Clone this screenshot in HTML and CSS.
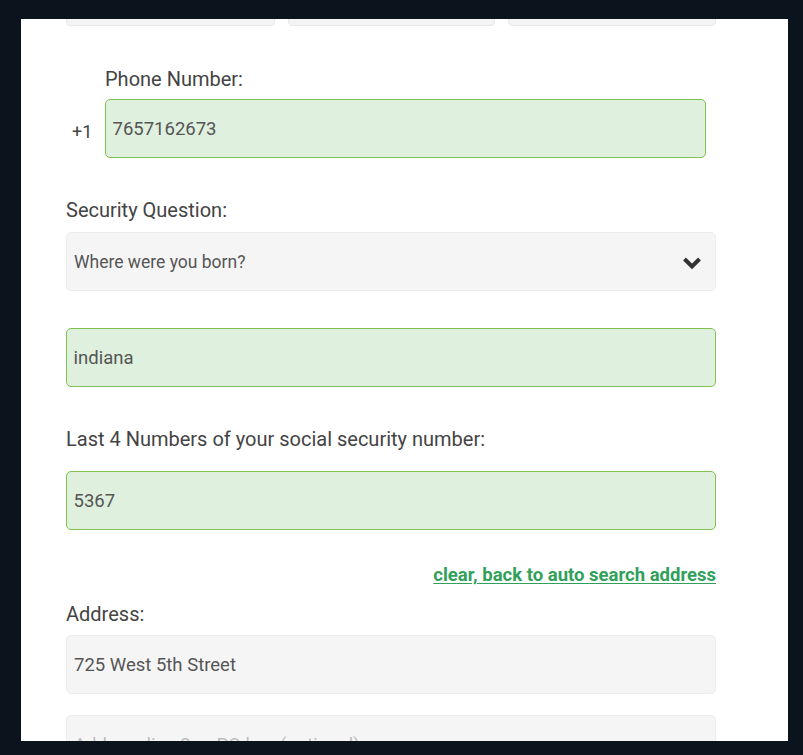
FILE: index.html
```html
<!DOCTYPE html>
<html lang="en">
<head>
<meta charset="utf-8">
<title>Registration</title>
<link rel="stylesheet" href="styles.css">
</head>
<body>
<div class="panel">
  <form class="form">
    <div class="triple">
      <div class="box"></div>
      <div class="box"></div>
      <div class="box"></div>
    </div>

    <div class="group phone-group">
      <label class="label phone-label">Phone Number:</label>
      <div class="phone-row">
        <span class="prefix">+1</span>
        <div class="field valid phone-field">7657162673</div>
      </div>
    </div>

    <div class="group sec-group">
      <label class="label">Security Question:</label>
      <div class="field select">
        <span class="select-text">Where were you born?</span>
        <svg class="chev" width="20" height="14" viewBox="0 0 20 14"><polyline points="2.5,3 10,10.5 17.5,3" fill="none" stroke="#333" stroke-width="4" stroke-linecap="butt" stroke-linejoin="miter"/></svg>
      </div>
    </div>

    <div class="field valid answer">indiana</div>

    <div class="group ssn-group">
      <label class="label ssn-label">Last 4 Numbers of your social security number:</label>
      <div class="field valid">5367</div>
    </div>

    <div class="link-row"><a class="link" href="#">clear, back to auto search address</a></div>

    <div class="group addr-group">
      <label class="label addr-label">Address:</label>
      <div class="field plain">725 West 5th Street</div>
      <div class="field plain placeholder addr2">Address line 2 or PO box (optional)</div>
    </div>
  </form>
</div>
</body>
</html>
```
FILE: styles.css
```css
html, body {
  margin: 0;
  padding: 0;
  background: #0b141c;
  height: 100%;
}
body {
  font-family: Roboto, "Liberation Sans", Arial, sans-serif;
  padding: 19px 15px 0 21px;
  box-sizing: border-box;
}
.panel {
  width: 767px;
  height: 722px;
  background: #ffffff;
  overflow: hidden;
}
.form {
  padding: 0 72px 0 45px;
  display: flex;
  flex-direction: column;
}
.triple {
  display: grid;
  grid-template-columns: 209px 207px 208px;
  column-gap: 13px;
  margin-top: -53px;
}
.box {
  height: 58px;
  background: #f4f4f4;
  border: 1px solid #e8e8e8;
  border-radius: 4px;
}
.group {
  display: flex;
  flex-direction: column;
}
.label {
  font-size: 20px;
  line-height: 24px;
  color: #444;
  margin-bottom: 10px;
}
.phone-group { margin-top: 41px; }
.phone-label { margin-left: 39px; margin-bottom: 8px; }
.phone-row {
  display: flex;
  align-items: center;
  padding-left: 6px;
  margin-right: 10px;
}
.prefix {
  font-size: 18px;
  color: #444;
  width: 20px;
  margin-right: 13px;
  margin-top: 6px;
}
.phone-field { flex: 1; }
.field {
  height: 59px;
  box-sizing: border-box;
  border-radius: 5px;
  padding: 0 8px;
  display: flex;
  align-items: center;
  font-size: 18.5px;
  color: #555;
}
.valid {
  background: #dff0de;
  border: 1.5px solid #80c150;
  padding-left: 6.5px;
}
.plain, .select {
  background: #f5f5f5;
  border: 1px solid #ededed;
  padding-left: 7px;
}
.select {
  justify-content: space-between;
  padding-right: 13px;
}
.select-text {
  font-size: 17.5px;
  color: #555;
}
.chev { margin-top: 3px; }
.sec-group { margin-top: 40px; }
.answer { margin-top: 37px; }
.ssn-group { margin-top: 40px; }
.ssn-label { margin-bottom: 20px; }
.link-row {
  display: flex;
  justify-content: flex-end;
  margin-top: 33px;
  line-height: 24px;
}
.link {
  font-size: 18.5px;
  font-weight: 700;
  color: #30a05a;
  text-decoration: underline;
  text-underline-offset: 2px;
}
.addr-group { margin-top: 15px; }
.addr-label { margin-bottom: 9px; }
.placeholder { color: #bdbdbd; }
.addr2 { margin-top: 21px; }
```
